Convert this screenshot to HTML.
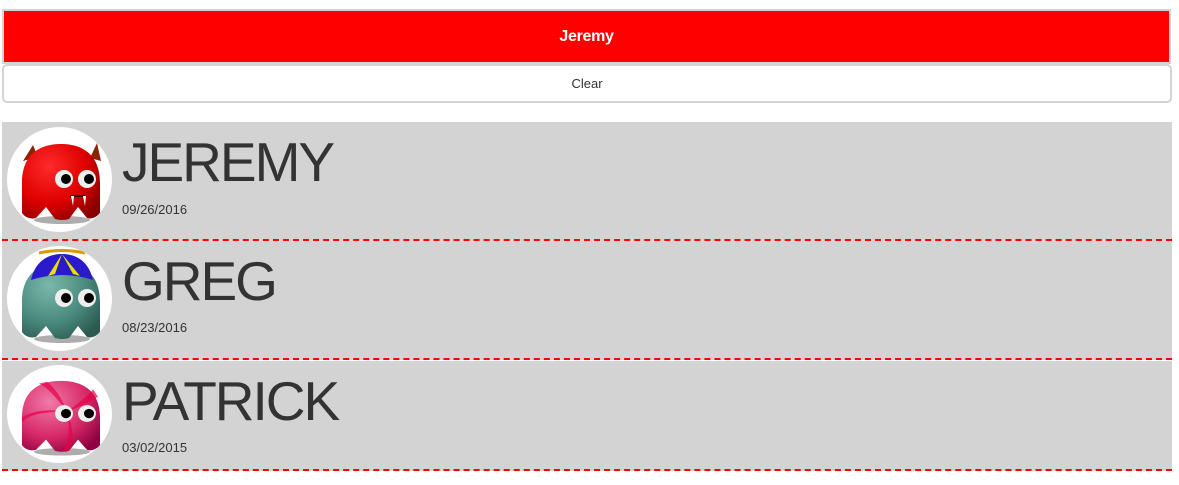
<!DOCTYPE html>
<html><head><meta charset="utf-8"><style>
body{margin:0;background:#fff;font-family:"Liberation Sans",Arial,sans-serif;width:1179px;height:485px;position:relative;overflow:hidden}
.abs{position:absolute}
.btn1{left:2px;top:9px;width:1165px;height:51px;background:#f00;border:2px solid #d3d3d3;color:#fff;font-weight:bold;font-size:16px;text-align:center;line-height:51px;letter-spacing:-0.3px}
.btn2{left:2px;top:64px;width:1166px;height:35px;background:#fff;border:2px solid #d3d3d3;border-radius:5px;color:#333;font-size:13px;text-align:center;line-height:35px}
.item{left:2px;width:1170px;background:#d3d3d3;border-bottom:2px dashed #f00}
.av{position:absolute;left:5px;width:105px;height:105px;border-radius:50%;background:#fff;overflow:hidden}
.name{position:absolute;left:120px;font-size:55px;color:#333;line-height:1;white-space:nowrap;letter-spacing:-2px}
.date{position:absolute;left:120px;font-size:13px;color:#333}
</style></head><body>
<div class="abs btn1">Jeremy</div>
<div class="abs btn2">Clear</div>

<div class="abs item" style="top:122px;height:117px">
 <div class="av" style="top:5px">
  <svg width="105" height="105" viewBox="0 0 105 105">
   <defs><radialGradient id="r1" cx="0.35" cy="0.3" r="0.8"><stop offset="0" stop-color="#ff2a2a"/><stop offset="0.6" stop-color="#d00"/><stop offset="1" stop-color="#800"/></radialGradient></defs>
   <ellipse cx="55" cy="93" rx="28" ry="4" fill="#777" opacity="0.6"/>
   <path d="M16,34 L26,18 L31,30Z M90,16 L94,34 L83,31Z" fill="#8b2500"/>
   <path d="M15,56 C15,28 32,17 54,17 C76,17 93,28 93,56 L93,86 Q87,93 80,91 L71,80 L62,92 Q55,94 48,92 L39,80 L29,91 Q20,93 15,86 Z" fill="url(#r1)"/>
   <circle cx="57" cy="52" r="9" fill="#eee"/><circle cx="80" cy="52" r="9" fill="#eee"/>
   <circle cx="59" cy="52" r="5" fill="#000"/><circle cx="82" cy="52" r="5" fill="#000"/>
   <path d="M63,69 L78,69" stroke="#000" stroke-width="1.5"/>
   <path d="M64,69 L67,69 L66,79Z M76,69 L79,69 L78,79Z" fill="#fff"/>
  </svg>
 </div>
 <div class="name" style="top:13px">JEREMY</div>
 <div class="date" style="top:80px">09/26/2016</div>
</div>

<div class="abs item" style="top:241px;height:117px">
 <div class="av" style="top:5px">
  <svg width="105" height="105" viewBox="0 0 105 105">
   <defs><radialGradient id="r2" cx="0.35" cy="0.3" r="0.8"><stop offset="0" stop-color="#7ab8aa"/><stop offset="0.6" stop-color="#4a8a7e"/><stop offset="1" stop-color="#2a5a50"/></radialGradient></defs>
   <ellipse cx="55" cy="93" rx="28" ry="4" fill="#777" opacity="0.6"/>
   <path d="M15,56 C15,28 32,17 54,17 C76,17 93,28 93,56 L93,86 Q87,93 80,91 L71,80 L62,92 Q55,94 48,92 L39,80 L29,91 Q20,93 15,86 Z" fill="url(#r2)"/>
   <path d="M24,34 C28,16 40,8 55,8 C70,8 82,16 86,34 Q55,24 24,34Z" fill="#2a1acc"/>
   <path d="M55,8 L41,30 L48,28Z M55,8 L66,28 L73,30Z" fill="#e8e000"/>
   <path d="M32,7 Q55,2 78,7" stroke="#d99a00" stroke-width="3" fill="none"/>
   <circle cx="57" cy="52" r="9" fill="#eee"/><circle cx="80" cy="52" r="9" fill="#eee"/>
   <circle cx="59" cy="52" r="5" fill="#000"/><circle cx="82" cy="52" r="5" fill="#000"/>
  </svg>
 </div>
 <div class="name" style="top:13px">GREG</div>
 <div class="date" style="top:79px">08/23/2016</div>
</div>

<div class="abs item" style="top:361px;height:108px">
 <div class="av" style="top:4px;height:98px">
  <svg width="105" height="98" viewBox="0 0 105 105" preserveAspectRatio="none">
   <defs><radialGradient id="r3" cx="0.35" cy="0.3" r="0.8"><stop offset="0" stop-color="#f07aa8"/><stop offset="0.6" stop-color="#d82a68"/><stop offset="1" stop-color="#900040"/></radialGradient></defs>
   <ellipse cx="55" cy="93" rx="28" ry="4" fill="#777" opacity="0.6"/>
   <path d="M15,56 C15,28 32,17 54,17 C76,17 93,28 93,56 L93,86 Q87,93 80,91 L71,80 L62,92 Q55,94 48,92 L39,80 L29,91 Q20,93 15,86 Z" fill="url(#r3)"/>
   <path d="M60,50 Q42,24 32,20 L40,18 Q52,28 60,50Z M60,50 Q22,50 15,62 L15,56 Q32,45 60,50Z M60,50 Q70,78 62,92 L56,92 Q65,74 60,50Z M60,50 Q83,32 86,26 L91,34 Q80,42 60,50Z" fill="#e8004a" opacity="0.7"/>
   <circle cx="57" cy="52" r="9" fill="#eee"/><circle cx="80" cy="52" r="9" fill="#eee"/>
   <circle cx="59" cy="52" r="5" fill="#000"/><circle cx="82" cy="52" r="5" fill="#000"/>
  </svg>
 </div>
 <div class="name" style="top:13px">PATRICK</div>
 <div class="date" style="top:79px">03/02/2015</div>
</div>
</body></html>
